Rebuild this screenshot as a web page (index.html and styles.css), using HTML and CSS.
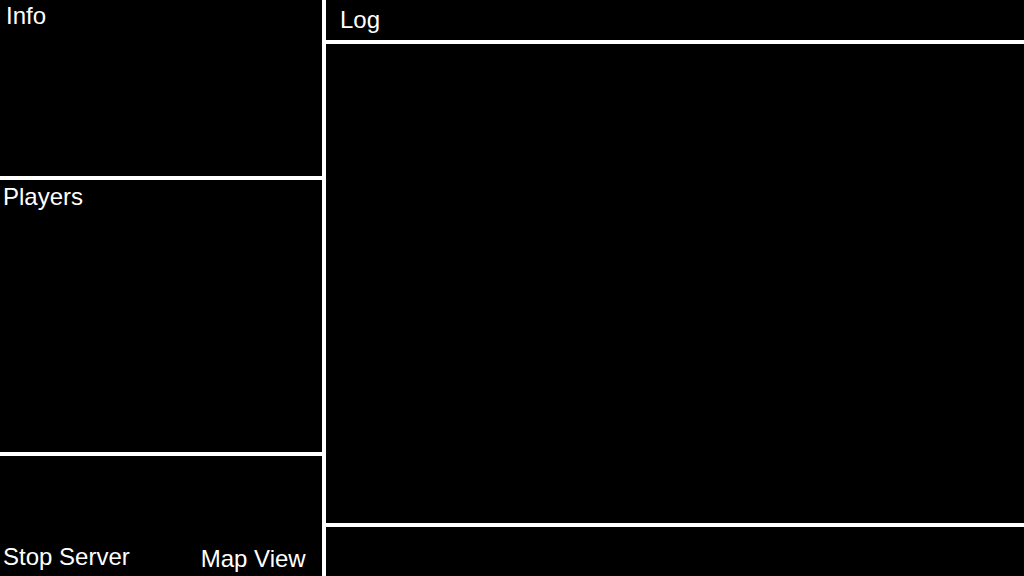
FILE: index.html
```html
<!DOCTYPE html>
<html lang="en">
<head>
    <meta charset="UTF-8">
    <meta name="viewport" content="width=device-width, initial-scale=1.0">
    <title>Server Console</title>
    <link rel="stylesheet" href="styles.css">
</head>
<body>
    <div class="console">
        <div class="sidebar">
            <div class="panel info">
                <div class="panel-title">Info</div>
            </div>
            <div class="panel players">
                <div class="panel-title">Players</div>
            </div>
            <div class="controls">
                <div class="btn stop">Stop Server</div>
                <div class="btn map">Map View</div>
            </div>
        </div>
        <div class="main">
            <div class="log-header">
                <div class="panel-title">Log</div>
            </div>
            <div class="log-body"></div>
            <div class="log-footer"></div>
        </div>
    </div>
</body>
</html>
```

FILE: styles.css
```css
html, body {
    margin: 0;
    height: 100%;
    background-color: #000;
    overflow: hidden;
}
body {
    font-family: "Liberation Sans", Arial, sans-serif;
    font-size: 24px;
    line-height: 28px;
    color: #fff;
}
.console {
    display: flex;
    height: 576px;
}
.sidebar {
    width: 322px;
    border-right: 4px solid #fff;
    display: flex;
    flex-direction: column;
}
.panel {
    border-bottom: 4px solid #fff;
    box-sizing: border-box;
}
.info {
    height: 180px;
    padding: 2px 0 0 6px;
}
.players {
    height: 276px;
    padding: 3px 0 0 3px;
}
.controls {
    flex: 1;
    display: flex;
    align-items: flex-start;
    padding: 87px 0 0 3px;
}
.map {
    margin: 2px 0 0 71px;
}
.main {
    flex: 1;
    display: flex;
    flex-direction: column;
}
.log-header {
    height: 44px;
    box-sizing: border-box;
    border-bottom: 4px solid #fff;
    padding: 6px 0 0 14px;
}
.log-body {
    height: 483px;
    box-sizing: border-box;
    border-bottom: 4px solid #fff;
}
.log-footer {
    flex: 1;
}
```
